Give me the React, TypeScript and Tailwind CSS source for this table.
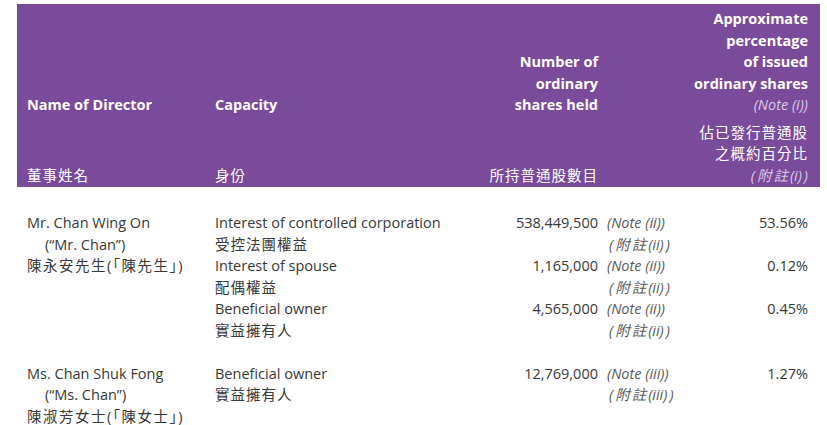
const FONT = "font-['Open_Sans','Noto_Sans_CJK_TC',sans-serif]";

type Holding = {
  capacity: string;
  capacityZh: string;
  shares: string;
  note: string;
  noteRef: string;
  pct: string;
};

type Director = {
  name: string;
  alias: string;
  nameZh: string;
  holdings: Holding[];
};

const directors: Director[] = [
  {
    name: 'Mr. Chan Wing On',
    alias: '(“Mr. Chan”)',
    nameZh: '陳永安先生(「陳先生」)',
    holdings: [
      {
        capacity: 'Interest of controlled corporation',
        capacityZh: '受控法團權益',
        shares: '538,449,500',
        note: '(Note (ii))',
        noteRef: '(ii)',
        pct: '53.56%',
      },
      {
        capacity: 'Interest of spouse',
        capacityZh: '配偶權益',
        shares: '1,165,000',
        note: '(Note (ii))',
        noteRef: '(ii)',
        pct: '0.12%',
      },
      {
        capacity: 'Beneficial owner',
        capacityZh: '實益擁有人',
        shares: '4,565,000',
        note: '(Note (ii))',
        noteRef: '(ii)',
        pct: '0.45%',
      },
    ],
  },
  {
    name: 'Ms. Chan Shuk Fong',
    alias: '(“Ms. Chan”)',
    nameZh: '陳淑芳女士(「陳女士」)',
    holdings: [
      {
        capacity: 'Beneficial owner',
        capacityZh: '實益擁有人',
        shares: '12,769,000',
        note: '(Note (iii))',
        noteRef: '(iii)',
        pct: '1.27%',
      },
    ],
  },
];

// (附註(ii)) - spacing on the CJK part only
function NoteZh({ refText }: { refText: string }) {
  return (
    <>
      <span className="tracking-[2px]">(附註</span>
      {refText}
      <span className="pl-[2px]">)</span>
    </>
  );
}

function HeaderTable() {
  return (
    <div className="ml-[17px] mt-[4px] h-[183px] w-[803px] bg-[#7a4a9b] pl-[10px] pt-[3px] text-white">
      <div className="grid h-full grid-cols-[188px_265px_118px_9px_201px] grid-rows-[1fr_auto] text-[14.5px] leading-[21.5px]">
        <div className="mb-[2px] self-end font-bold">Name of Director</div>
        <div className="mb-[2px] self-end font-bold">Capacity</div>
        <div className="mb-[2px] self-end text-right font-bold">
          Number of
          <br />
          ordinary
          <br />
          shares held
        </div>
        <div />
        <div className="mb-[2px] self-end text-right">
          <div className="font-bold">
            Approximate
            <br />
            percentage
            <br />
            of issued
            <br />
            ordinary shares
          </div>
          <div className="italic text-[#d9c8ea]">(Note (i))</div>
        </div>

        <div className="self-end pb-[1px] tracking-[1px]">董事姓名</div>
        <div className="self-end pb-[1px] tracking-[1px]">身份</div>
        <div className="self-end pb-[1px] text-right tracking-[1px]">所持普通股數目</div>
        <div />
        <div className="mt-[4px] self-end pb-[1px] text-right">
          <span className="tracking-[1px]">佔已發行普通股</span>
          <br />
          <span className="tracking-[1px]">之概約百分比</span>
          <br />
          <span className="italic text-[#d9c8ea]">
            <NoteZh refText="(i)" />
          </span>
        </div>
      </div>
    </div>
  );
}

function DirectorBlock({ d }: { d: Director }) {
  return (
    <div className="grid grid-cols-[188px_615px] text-[14.5px] leading-[21.5px] text-[#383838]">
      <div>
        <div>{d.name}</div>
        <div className="pl-[18px]">{d.alias}</div>
        <div className="tracking-[1.5px]">{d.nameZh}</div>
      </div>
      <div>
        {d.holdings.map((h) => (
          <div key={h.capacity + h.shares} className="grid grid-cols-[265px_118px_9px_113px_88px]">
            <div>
              <div>{h.capacity}</div>
              <div className="tracking-[1px]">{h.capacityZh}</div>
            </div>
            <div className="text-right">{h.shares}</div>
            <div />
            <div className="italic text-[#5a5a5a]">
              <div>{h.note}</div>
              <div className="pl-[2px]">
                <NoteZh refText={h.noteRef} />
              </div>
            </div>
            <div className="text-right">{h.pct}</div>
          </div>
        ))}
      </div>
    </div>
  );
}

export default function App() {
  return (
    <div className={`h-[425px] w-[827px] overflow-hidden bg-white ${FONT}`}>
      <HeaderTable />
      <div className="ml-[27px] flex flex-col gap-[21.5px] pt-[25px]">
        {directors.map((d) => (
          <DirectorBlock key={d.name} d={d} />
        ))}
      </div>
    </div>
  );
}
